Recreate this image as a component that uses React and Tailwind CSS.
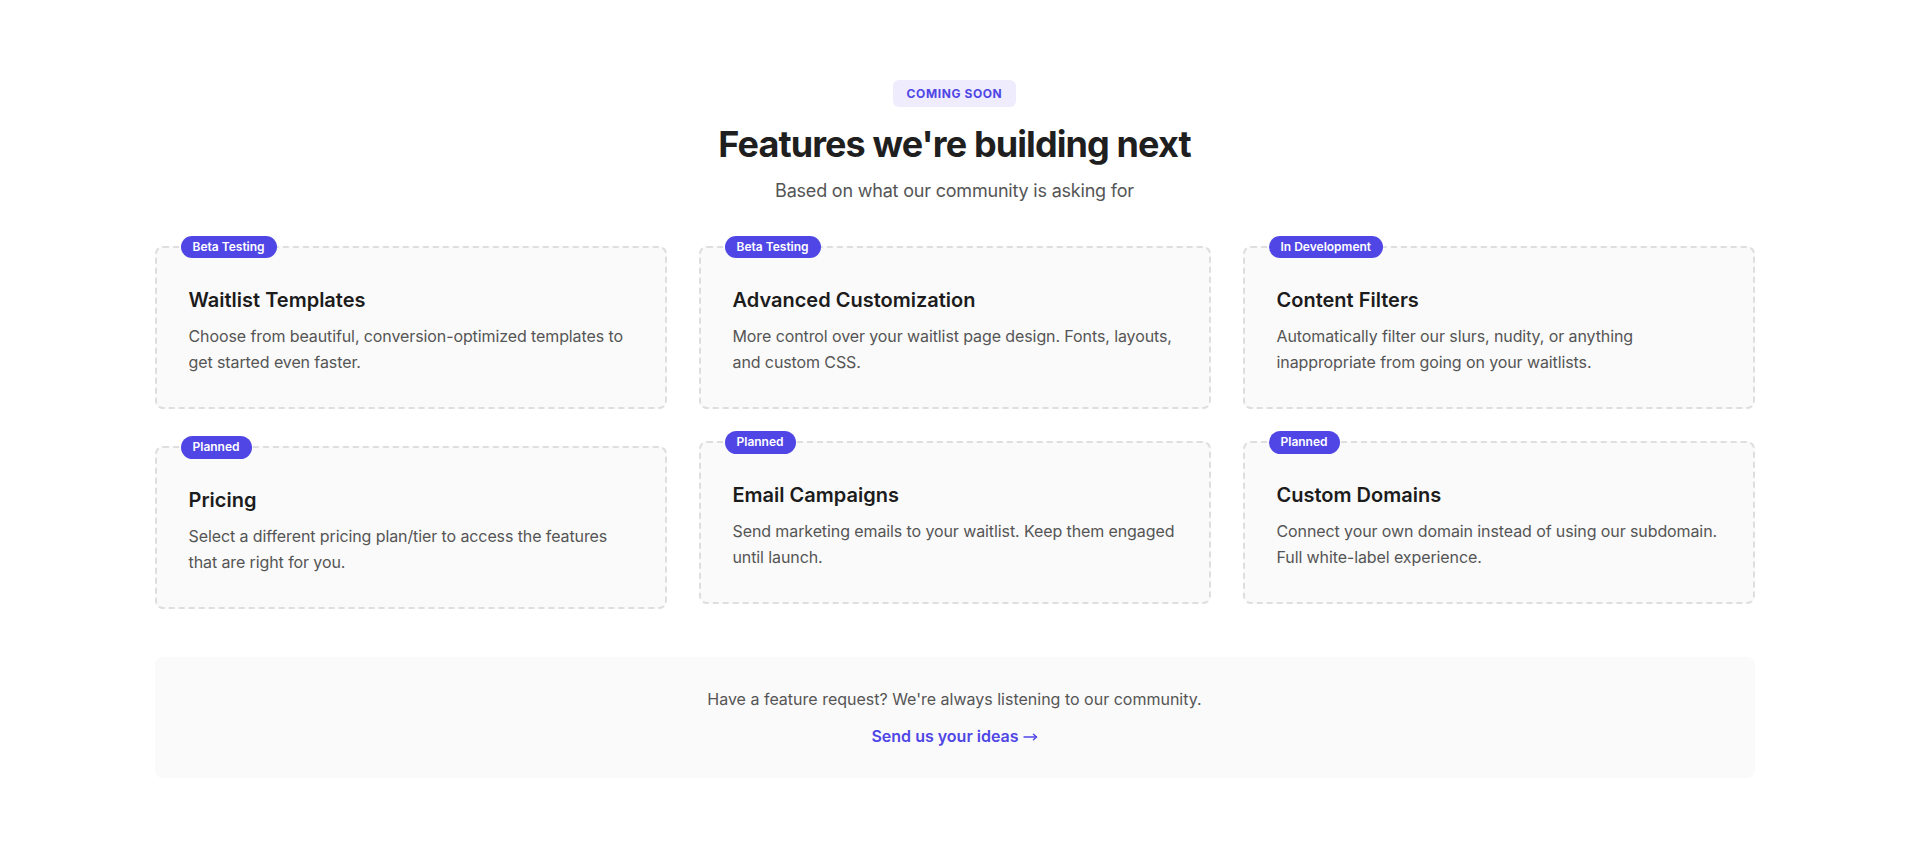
import React from "react";

const features = [
  { badge: "Beta Testing", title: "Waitlist Templates", desc: "Choose from beautiful, conversion-optimized templates to get started even faster.", extra: "" },
  { badge: "Beta Testing", title: "Advanced Customization", desc: "More control over your waitlist page design. Fonts, layouts, and custom CSS.", extra: "" },
  { badge: "In Development", title: "Content Filters", desc: "Automatically filter our slurs, nudity, or anything inappropriate from going on your waitlists.", extra: "" },
  { badge: "Planned", title: "Pricing", desc: "Select a different pricing plan/tier to access the features that are right for you.", extra: "mt-[5px]" },
  { badge: "Planned", title: "Email Campaigns", desc: "Send marketing emails to your waitlist. Keep them engaged until launch.", extra: "" },
  { badge: "Planned", title: "Custom Domains", desc: "Connect your own domain instead of using our subdomain. Full white-label experience.", extra: "" },
];

function Card({ badge, title, desc, extra }) {
  return (
    <div className={`relative rounded-lg border-2 border-dashed border-[#dedede] bg-[#fafafa] px-8 pt-[38px] pb-8 ${extra}`}>
      <span className="absolute -top-3 left-6 rounded-full bg-[#4f46e5] px-3 py-1 text-xs font-semibold leading-[1.2] text-white">
        {badge}
      </span>
      <h3 className="text-xl font-semibold leading-7 text-[#1c1c1c]">{title}</h3>
      <p className="mt-2.5 text-base leading-[1.6] tracking-[-0.1px] text-[#555555]">{desc}</p>
    </div>
  );
}

export default function App() {
  return (
    <div className="min-h-screen w-full bg-white" style={{ fontFamily: "Inter, 'Noto Sans', sans-serif" }}>
      <div className="mx-auto w-full max-w-[1600px] pt-20 pb-20">
        <div className="flex flex-col items-center text-center">
          <span className="rounded-md bg-[#eeecfd] px-3.5 py-[5px] text-xs font-bold uppercase leading-[17px] tracking-wider text-[#4f46e5]">
            Coming Soon
          </span>
          <h2 className="mt-[17px] text-4xl font-bold leading-10 tracking-tight text-[#1f1f1f]">
            Features we're building next
          </h2>
          <p className="mt-[13px] text-lg leading-7 tracking-[-0.2px] text-[#555555]">
            Based on what our community is asking for
          </p>
        </div>

        <div className="mt-[41px] grid grid-cols-3 items-start gap-x-8 gap-y-8">
          {features.map((f) => (
            <Card key={f.title} {...f} />
          ))}
        </div>

        <div className="mt-12 rounded-lg bg-[#fafafa] px-8 py-[30px] text-center">
          <p className="text-base leading-6 text-[#555555]">
            Have a feature request? We're always listening to our community.
          </p>
          <a href="#" className="mt-[13px] inline-flex items-center gap-1 text-base font-semibold leading-6 text-[#4f46e5]">
            Send us your ideas
            <svg width="15" height="10" viewBox="0 0 15 10" fill="none" stroke="currentColor" strokeWidth="1.4" strokeLinecap="round" strokeLinejoin="round" className="mt-[2px]">
              <path d="M1 5h12.5" />
              <path d="M10.5 2.2L13.5 5l-3 2.8" />
            </svg>
          </a>
        </div>
      </div>
    </div>
  );
}
